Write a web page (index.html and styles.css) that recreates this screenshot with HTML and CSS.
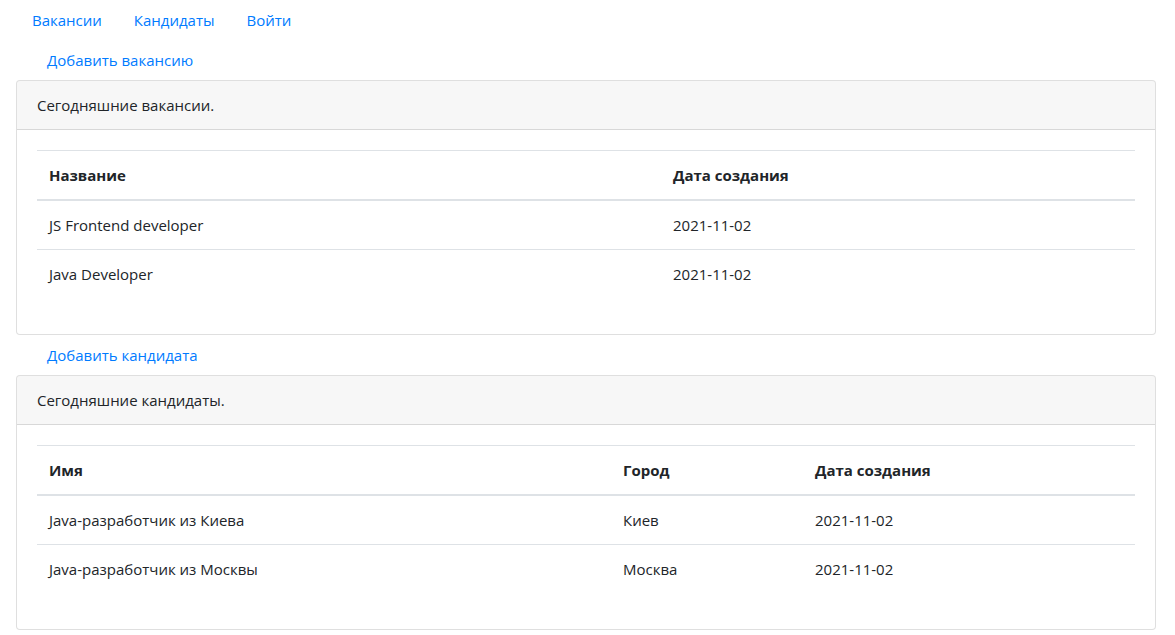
FILE: index.html
```html
<!DOCTYPE html>
<html lang="ru">
<head>
<meta charset="utf-8">
<title>Работа мечты</title>
<link rel="stylesheet" href="styles.css">
</head>
<body>
<div class="container">
  <ul class="nav">
    <li><a class="nav-link" href="#">Вакансии</a></li>
    <li><a class="nav-link" href="#">Кандидаты</a></li>
    <li><a class="nav-link" href="#">Войти</a></li>
  </ul>
  <ul class="nav nav-sub">
    <li><a class="nav-link" href="#">Добавить вакансию</a></li>
  </ul>
  <div class="card">
    <div class="card-header">Сегодняшние вакансии.</div>
    <div class="card-body">
      <table class="table">
        <thead>
          <tr><th class="w-vac-name">Название</th><th>Дата создания</th></tr>
        </thead>
        <tbody>
          <tr><td>JS Frontend developer</td><td>2021-11-02</td></tr>
          <tr><td>Java Developer</td><td>2021-11-02</td></tr>
        </tbody>
      </table>
    </div>
  </div>
  <ul class="nav nav-sub">
    <li><a class="nav-link" href="#">Добавить кандидата</a></li>
  </ul>
  <div class="card">
    <div class="card-header">Сегодняшние кандидаты.</div>
    <div class="card-body">
      <table class="table">
        <thead>
          <tr><th class="w-cand-name">Имя</th><th class="w-cand-city">Город</th><th>Дата создания</th></tr>
        </thead>
        <tbody>
          <tr><td>Java-разработчик из Киева</td><td>Киев</td><td>2021-11-02</td></tr>
          <tr><td>Java-разработчик из Москвы</td><td>Москва</td><td>2021-11-02</td></tr>
        </tbody>
      </table>
    </div>
  </div>
</div>
</body>
</html>
```
FILE: styles.css
```css
* { box-sizing: border-box; }
html, body { margin: 0; padding: 0; }
body {
  font-family: "Open Sans", "Noto Sans", sans-serif;
  font-size: 15px;
  line-height: 24px;
  color: #212529;
  background: #fff;
}
.container {
  width: 1140px;
  margin: 0 0 0 16px;
}
.nav {
  list-style: none;
  margin: 0;
  padding: 0;
  display: flex;
}
.nav-link {
  display: block;
  padding: 8px 16px;
  color: #007bff;
  text-decoration: none;
}
.nav-sub { padding-left: 15px; }
.card {
  border: 1px solid rgba(0,0,0,.125);
  border-radius: 4px;
  background: #fff;
}
.card-header {
  padding: 12px 20px;
  background: rgba(0,0,0,.03);
  border-bottom: 1px solid rgba(0,0,0,.125);
  border-radius: 3px 3px 0 0;
}
.card-body { padding: 20px; }
.table {
  width: 100%;
  border-collapse: collapse;
  margin-bottom: 16px;
}
.table th, .table td {
  padding: 12px;
  text-align: left;
  vertical-align: top;
  border-top: 1px solid #dee2e6;
}
.table th { font-weight: 700; }
.table thead th {
  border-bottom: 2px solid #dee2e6;
}
.w-vac-name { width: 624px; }
.w-cand-name { width: 574px; }
.w-cand-city { width: 192px; }
```
